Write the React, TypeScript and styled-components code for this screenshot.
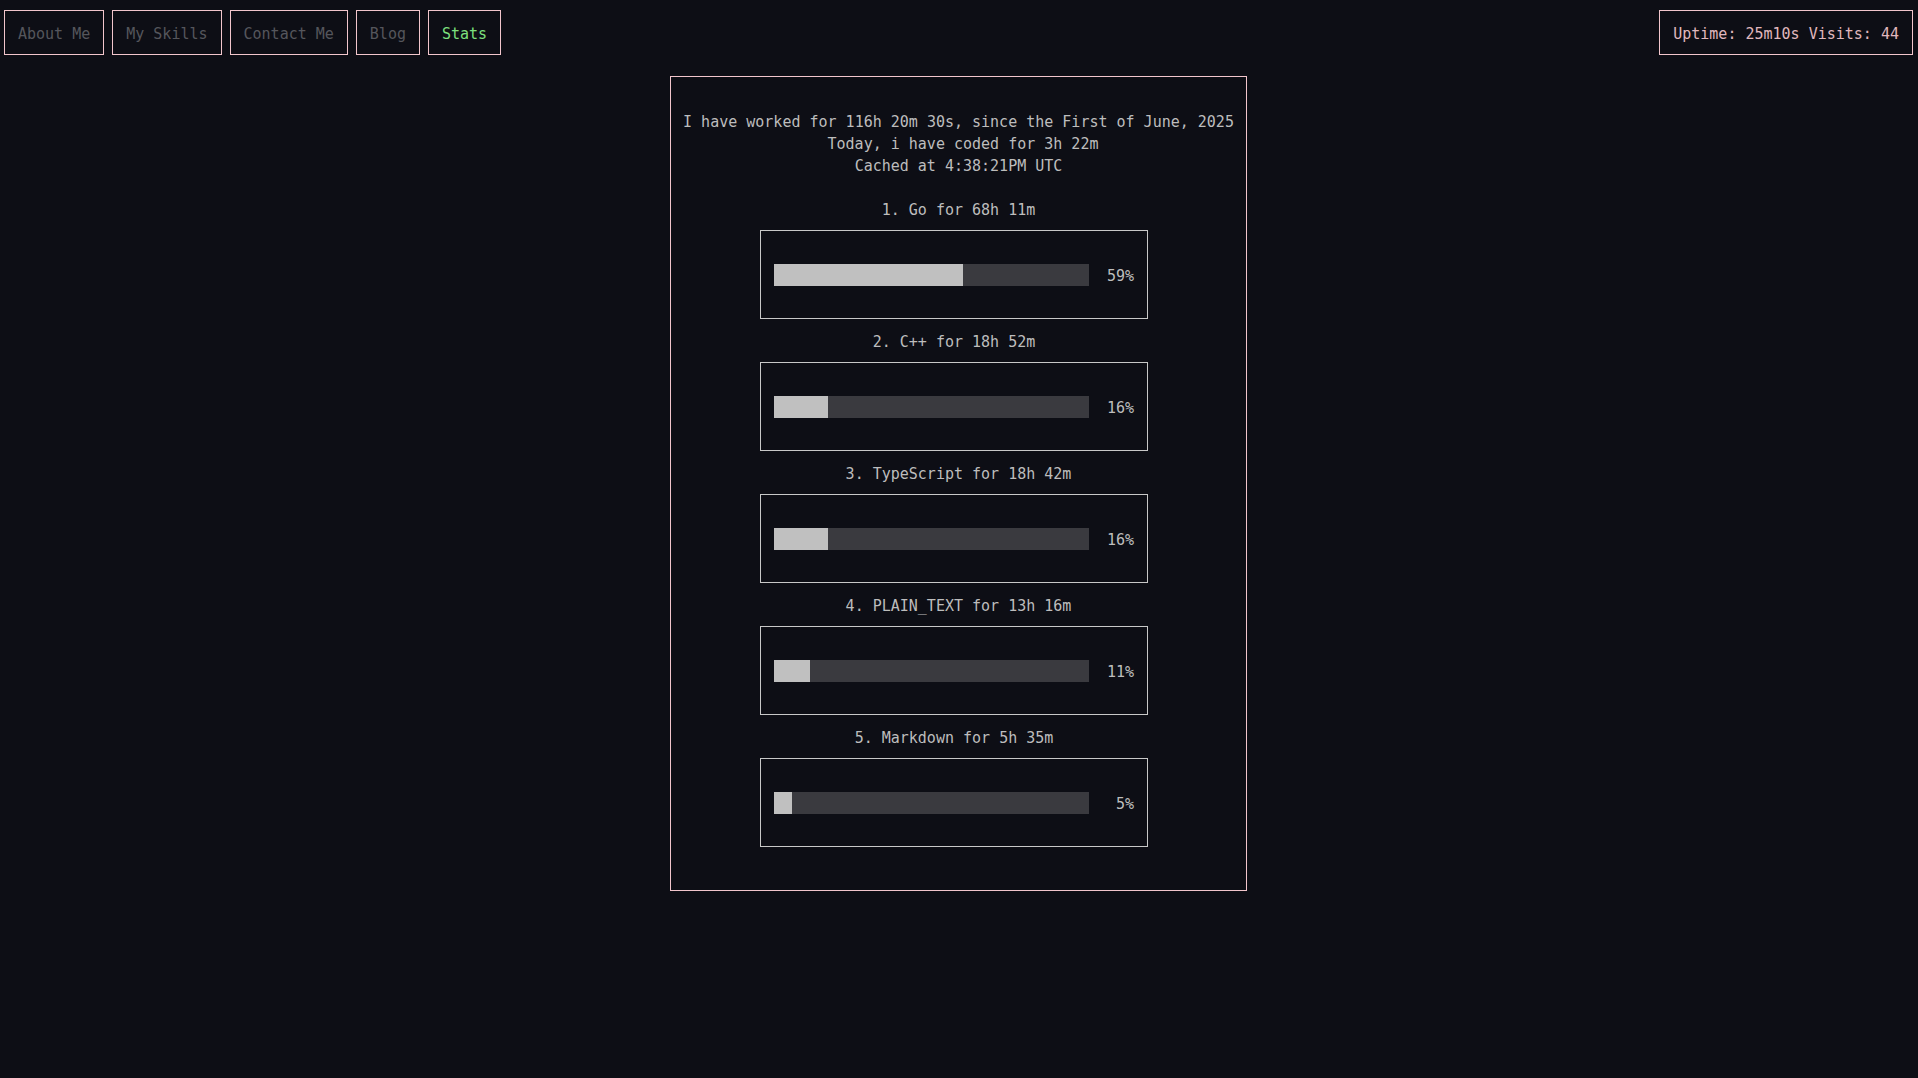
import React from "react";
import styled, { createGlobalStyle } from "styled-components";

const GlobalStyle = createGlobalStyle`
  html, body {
    margin: 0;
    padding: 0;
    background: #0d0e15;
    min-height: 100%;
  }
  body {
    font-family: "DejaVu Sans Mono", "Liberation Mono", monospace;
    font-size: 15px;
    color: #bdbdbd;
  }
`;

const Page = styled.div`
  min-height: 1078px;
  background: #0d0e15;
  padding: 10px 5px 0 4px;
  box-sizing: border-box;
`;

const TopBar = styled.header`
  display: flex;
  justify-content: space-between;
  align-items: flex-start;
`;

const Nav = styled.nav`
  display: flex;
  gap: 8px;
`;

const NavButton = styled.a<{ $active?: boolean }>`
  display: block;
  border: 1px solid #f2c6cc;
  padding: 15px 13px 11px;
  color: ${(p) => (p.$active ? "#7ee07e" : "#55565c")};
  text-decoration: none;
  line-height: 17px;
  cursor: pointer;
`;

const Status = styled.div`
  border: 1px solid #f2c6cc;
  padding: 15px 13px 11px;
  color: #e0b8be;
  line-height: 17px;
`;

const Main = styled.main`
  display: flex;
  justify-content: center;
  margin-top: 21px;
`;

const Card = styled.section`
  border: 1px solid #f2c6cc;
  padding: 34px 12px 43px;
  text-align: center;
  line-height: 22px;
`;

const Line = styled.div`
  white-space: pre;
`;

const Spacer = styled.div`
  height: 22px;
`;

const Item = styled.div`
  display: flex;
  flex-direction: column;
  align-items: center;
  & + & {
    margin-top: 12px;
  }
`;

const ItemTitle = styled.div`
  white-space: pre;
`;

const BarBox = styled.div`
  width: 388px;
  box-sizing: border-box;
  margin-top: 9px;
  margin-right: 9px;
  border: 1px solid #c8c8c8;
  padding: 33px 13px 32px;
  display: flex;
  align-items: center;
`;

const Track = styled.div`
  width: 315px;
  height: 22px;
  background: #3a3a3f;
  display: flex;
`;

const Fill = styled.div`
  height: 100%;
  background: #c0c0c0;
`;

const Pct = styled.span`
  width: 45px;
  text-align: right;
  line-height: 20px;
  padding-top: 2px;
`;

const langs = [
  { name: "Go", time: "68h 11m", pct: 59, fill: 60 },
  { name: "C++", time: "18h 52m", pct: 16, fill: 17.2 },
  { name: "TypeScript", time: "18h 42m", pct: 16, fill: 17.2 },
  { name: "PLAIN_TEXT", time: "13h 16m", pct: 11, fill: 11.4 },
  { name: "Markdown", time: "5h 35m", pct: 5, fill: 5.7 },
];

export default function App() {
  return (
    <>
      <GlobalStyle />
      <Page>
        <TopBar>
          <Nav>
            <NavButton>About Me</NavButton>
            <NavButton>My Skills</NavButton>
            <NavButton>Contact Me</NavButton>
            <NavButton>Blog</NavButton>
            <NavButton $active>Stats</NavButton>
          </Nav>
          <Status>Uptime: 25m10s Visits: 44</Status>
        </TopBar>
        <Main>
          <Card>
            <Line>I have worked for 116h 20m 30s, since the First of June, 2025</Line>
            <Line>{" "}Today, i have coded for 3h 22m</Line>
            <Line>Cached at 4:38:21PM UTC</Line>
            <Spacer />
            {langs.map((l, i) => {
              const len = `${i + 1}. ${l.name} for ${l.time}`.length;
              return (
                <Item key={l.name}>
                  <ItemTitle>
                    {i + 1}. {l.name} for {l.time}
                    {len % 2 === 0 ? " " : ""}
                  </ItemTitle>
                  <BarBox>
                    <Track>
                      <Fill style={{ width: `${l.fill}%` }} />
                    </Track>
                    <Pct>{l.pct}%</Pct>
                  </BarBox>
                </Item>
              );
            })}
          </Card>
        </Main>
      </Page>
    </>
  );
}
